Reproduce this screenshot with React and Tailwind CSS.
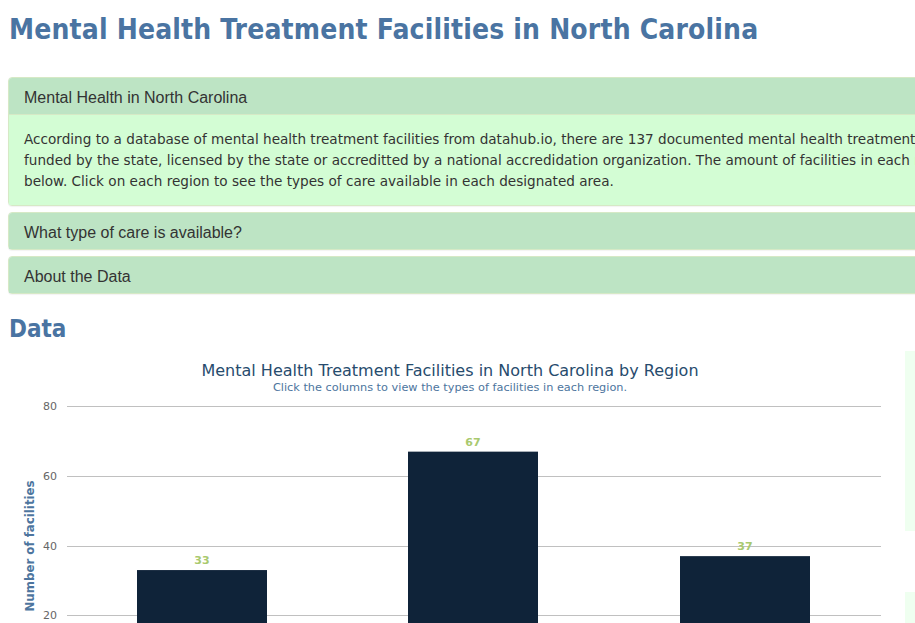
import React from "react"

const bars = [
  { x: 137, v: 33 },
  { x: 408, v: 67 },
  { x: 680, v: 37 },
]

const y = (v) => 685 - 3.483 * v

function Panel({ title, children }) {
  return (
    <div className="rounded-[4px] border border-[#d6e9c6] bg-white shadow-[0_1px_1px_rgba(0,0,0,0.05)]">
      <div className="bg-[#bde4c4] px-[15px] pt-[10px] pb-[6px] rounded-t-[3px] text-[16px] leading-[20px] text-[#333] font-['Liberation_Sans',Arial,sans-serif]">
        {title}
      </div>
      {children && (
        <div className="bg-[#d3fdd4] border-t border-[#d6e9c6] px-[15px] pt-[14px] pb-[13px] text-[13.6px] leading-[21px] text-[#333] font-['DejaVu_Sans',Verdana,sans-serif] whitespace-nowrap">
          {children}
        </div>
      )}
    </div>
  )
}

function Chart() {
  return (
    <svg width="897" height="273" viewBox="8 350 897 273" className="block">
      <text x="450" y="376" textAnchor="middle" fontSize="16" fill="#274b6d" fontFamily="DejaVu Sans, Verdana, sans-serif">
        Mental Health Treatment Facilities in North Carolina by Region
      </text>
      <text x="450" y="391" textAnchor="middle" fontSize="11.3" fill="#4d759e" fontFamily="DejaVu Sans, Verdana, sans-serif">
        Click the columns to view the types of facilities in each region.
      </text>
      {[80, 60, 40, 20].map((t) => (
        <g key={t}>
          <line x1="67" x2="881" y1={Math.round(y(t)) + 0.5} y2={Math.round(y(t)) + 0.5} stroke="#c0c0c0" strokeWidth="1" />
          <text x="57" y={y(t) + 4} textAnchor="end" fontSize="11" fill="#666" fontFamily="DejaVu Sans, Verdana, sans-serif">
            {t}
          </text>
        </g>
      ))}
      {bars.map((b) => (
        <g key={b.x}>
          <rect x={b.x} y={y(b.v)} width="130" height={685 - y(b.v)} fill="#0f2339" />
          <text x={b.x + 65} y={y(b.v) - 6} textAnchor="middle" fontSize="11" fontWeight="bold" fill="#a9c96e" fontFamily="DejaVu Sans, Verdana, sans-serif">
            {b.v}
          </text>
        </g>
      ))}
      <text
        x="0"
        y="0"
        transform="translate(34 546) rotate(-90)"
        textAnchor="middle"
        fontSize="11.8"
        fontWeight="bold"
        fill="#4d759e"
        fontFamily="DejaVu Sans, Verdana, sans-serif"
      >
        Number of facilities
      </text>
    </svg>
  )
}

export default function App() {
  return (
    <div className="w-[915px] h-[623px] overflow-hidden bg-white">
      <div className="w-[1160px] px-[8px]">
        <h1 className="pt-[11px] pl-[1px] text-[28px] leading-[38px] font-bold tracking-[0.16px] text-[#4a74a2] font-['DejaVu_Sans_Condensed','DejaVu_Sans',Verdana,sans-serif]">
          Mental Health Treatment Facilities in North Carolina
        </h1>

        {/* accordion */}
        <div className="mt-[28px] flex flex-col gap-[6px]">
          <Panel title="Mental Health in North Carolina">
            According to a database of mental health treatment facilities from datahub.io, there are 137 documented mental health treatment facilities in North Carolina that are
            <br />
            funded by the state, licensed by the state or accreditted by a national accredidation organization. The amount of facilities in each region is shown in the chart
            <br />
            below. Click on each region to see the types of care available in each designated area.
          </Panel>
          <Panel title="What type of care is available?" />
          <Panel title="About the Data" />
        </div>

        <h2 className="mt-[20px] pl-[1px] text-[24px] leading-[30px] font-bold text-[#4a74a2] font-['DejaVu_Sans_Condensed','DejaVu_Sans',Verdana,sans-serif]">
          Data
        </h2>

        <div className="mt-[6px] flex">
          <Chart />
          <div className="flex flex-col gap-[61px] pt-[1px]">
            <div className="w-[240px] h-[180px] bg-[#effff0]" />
            <div className="w-[240px] h-[60px] bg-[#effff0]" />
          </div>
        </div>
      </div>
    </div>
  )
}
